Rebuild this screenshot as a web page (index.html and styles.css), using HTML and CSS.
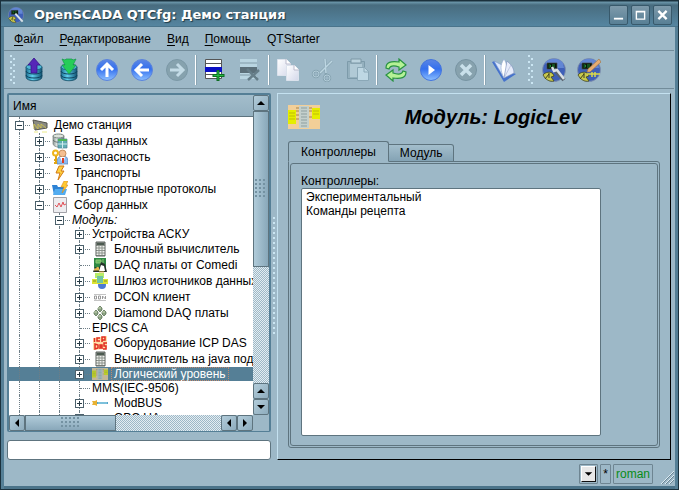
FILE: index.html
```html
<!DOCTYPE html>
<html lang="ru">
<head>
<meta charset="utf-8">
<title>OpenSCADA QTCfg: Демо станция</title>
<link rel="stylesheet" href="styles.css">
</head>
<body>
<svg class="defs" aria-hidden="true">
  <defs>
    <linearGradient id="blue" x1="0" y1="0" x2="0" y2="1"><stop offset="0" stop-color="#5b86e4"/><stop offset=".45" stop-color="#3470ee"/><stop offset="1" stop-color="#8cc0ff"/></linearGradient>
    <linearGradient id="cyl" x1="0" x2="1"><stop offset="0" stop-color="#1d6f92"/><stop offset=".4" stop-color="#5fd0ee"/><stop offset="1" stop-color="#125474"/></linearGradient>
    <linearGradient id="paper" x1="0" y1="0" x2="1" y2="1"><stop offset="0" stop-color="#ffffff"/><stop offset="1" stop-color="#d4d8ea"/></linearGradient>
    <linearGradient id="metal" x1="0" x2="1"><stop offset="0" stop-color="#8b9694"/><stop offset=".35" stop-color="#e3e9e6"/><stop offset="1" stop-color="#6d7a78"/></linearGradient>
    <symbol id="drum" viewBox="0 0 24 24">
      <path d="M4 9v10c0 5 16 5 16 0V9z" fill="url(#cyl)" stroke="#134a63" stroke-width=".8"/>
      <ellipse cx="12" cy="9" rx="8" ry="3" fill="#4fb6d6" stroke="#1a5b78" stroke-width=".8"/>
      <path d="M4 13c0 4 16 4 16 0M4 17c0 4 16 4 16 0" fill="none" stroke="#0f4560"/>
    </symbol>
    <symbol id="scada" viewBox="0 0 24 24">
      <circle cx="12" cy="12" r="11.5" fill="#3e5fb8" stroke="#8794a8" stroke-width=".8"/>
      <path d="M3 5a11.500 11.500 0 0 1 18 0l1 5H12z" fill="#6286d4"/>
      <path d="M5 5h10v6H5z" fill="#0a120a" stroke="#46504a" stroke-width=".7"/>
      <path d="M6.500 7h2v2h-2M10 7h3M10 9h3" fill="none" stroke="#1e8b32"/>
      <path d="M1 17c2-3 8-4 10-1l1 2-3 1 3 4c-4 1-7-1-9-3z" fill="#c9c94d" stroke="#43461f" stroke-width=".8"/>
      <path d="M3 21l4-5M7 15v5" stroke="#3e4120"/>
    </symbol>
    <symbol id="calc" viewBox="0 0 16 16">
      <path d="M4 1h9v14H4z" fill="#8e948e" stroke="#5d635e"/>
      <path d="M5 2h7v2H5z" fill="#4c5a50"/>
      <path d="M5.500 5v9M8.500 5v9M11.500 5v9" stroke="#eef0ec" stroke-width="2" stroke-dasharray="1.500 1"/>
    </symbol>
    <symbol id="logic" viewBox="0 0 32 24" preserveAspectRatio="none">
      <path d="M0 0h32v24H0z" fill="#f2cf98"/>
      <path d="M8 3h16M8 6h3M21 6h4M8 10h3M8 14h3M21 12h4" stroke="#a4824c"/>
      <path d="M0 5h8v14H0z" fill="#e5ee00"/><path d="M24 3h8v11h-8z" fill="#e5ee00"/>
      <path d="M1 8h6M1 11h6M1 14h6M25 6h6M25 9h6" stroke="#bfbd08"/>
      <path d="M11 1h10v22H11z" fill="#c4d0cc"/>
      <path d="M13 3h6M13 6h6M13 9h6M13 12h6M13 15h6M13 18h6M13 21h6" stroke="#8e9f9f"/>
    </symbol>
  </defs>
</svg>

<div class="window">
  <header class="titlebar">
    <svg class="app-icon" viewBox="0 0 24 24"><use href="#scada"/><path d="M11 10l11 12" stroke="#d7e2e6" stroke-width="3"/></svg>
    <h1>OpenSCADA QTCfg: Демо станция</h1>
    <button class="win-btn" aria-label="Свернуть"><svg viewBox="0 0 12 12"><path d="M1 10h10" stroke="#fff" stroke-width="2"/></svg></button>
    <button class="win-btn" aria-label="Развернуть"><svg viewBox="0 0 12 12"><path d="M1.500 2h9v8.500h-9zM1 2.500h10" fill="none" stroke="#fff" stroke-width="1.500"/></svg></button>
    <button class="win-btn" aria-label="Закрыть"><svg viewBox="0 0 12 12"><path d="M1.500 1.500l9 9M10.500 1.500l-9 9" stroke="#fff" stroke-width="2.500"/></svg></button>
  </header>

  <nav class="menubar">
    <button><u>Ф</u>айл</button>
    <button><u>Р</u>едактирование</button>
    <button><u>В</u>ид</button>
    <button><u>П</u>омощь</button>
    <button>QTStarter</button>
  </nav>

  <div class="toolbar">
    <span class="grip"></span>
    <button aria-label="Загрузить"><svg viewBox="0 0 24 24"><use href="#drum"/><path d="M12 0l6 7h-3v8H9V7H6z" fill="#5626b8" stroke="#37158a" stroke-width=".8"/></svg></button>
    <button aria-label="Сохранить"><svg viewBox="0 0 24 24"><use href="#drum"/><path d="M5 1l3 1 1-1h6l1 1 3-1-3 6h3l-7 9-7-9h3z" fill="#25cd58" stroke="#16964a" stroke-width=".7"/></svg></button>
    <span class="sep"></span>
    <button aria-label="Вверх"><svg viewBox="0 0 24 24"><circle cx="12" cy="12" r="10.500" fill="url(#blue)" stroke="#5b84dc"/><path d="M12 19V7M6 12l6-6 6 6" fill="none" stroke="#fff" stroke-width="3"/></svg></button>
    <button aria-label="Назад"><svg viewBox="0 0 24 24"><circle cx="12" cy="12" r="10.500" fill="url(#blue)" stroke="#5b84dc"/><path d="M19 12H7M12 6l-6 6 6 6" fill="none" stroke="#fff" stroke-width="3"/></svg></button>
    <button aria-label="Вперёд" disabled><svg viewBox="0 0 24 24"><circle cx="12" cy="12" r="10.500" fill="#86a2ae" stroke="#7b98a6"/><path d="M5 12h12M12 6l6 6-6 6" fill="none" stroke="#c3dbe6" stroke-width="3"/></svg></button>
    <span class="sep"></span>
    <button aria-label="Добавить"><svg viewBox="0 0 24 24"><path d="M2.500 1.500h16v19h-16zM2 5.500h17M2 16.500h17" fill="#fff" stroke="#555"/><path d="M2 9h17v5H2z" fill="#0b10c4"/><path d="M15 12v11M9.500 17.500h12" stroke="#0d6d22" stroke-width="3"/><path d="M15 13v9M10.500 17.500h10" stroke="#27bd43"/></svg></button>
    <button aria-label="Удалить" disabled><svg viewBox="0 0 24 24"><path d="M2 1h17v20H2z" fill="#b9d5e1"/><path d="M2 5h17M2 17h17" stroke="#819ba8"/><path d="M2 9h17v6H2z" fill="#5c707a"/><path d="M9 11l11 11M21 12L10 22" stroke="#667e89" stroke-width="2.500"/></svg></button>
    <span class="sep"></span>
    <button aria-label="Копировать"><svg viewBox="0 0 24 24"><path d="M1.500 1.500h9l4 4v12h-13z" fill="url(#paper)" stroke="#dbe2ec"/><path d="M10 1v5h5" fill="#fff" stroke="#bbc"/><path d="M10.500 7.500h8l4 4v11h-12z" fill="url(#paper)" stroke="#dbe2ec"/><path d="M18 7v5h5" fill="#fff" stroke="#bbc"/></svg></button>
    <button aria-label="Вырезать" disabled><svg viewBox="0 0 24 24"><g fill="none" stroke="#86a3b1" stroke-width="2.500"><path d="M21 3L8 16M14 1l1 16"/><circle cx="5" cy="16" r="3"/><circle cx="16" cy="20" r="3"/></g><path d="M21 3L9 15M14 1l1 14" stroke="#bdd6e2" stroke-width="1.500"/><circle cx="5" cy="16" r="3" fill="none" stroke="#b2ccd8"/><circle cx="16" cy="20" r="3" fill="none" stroke="#b2ccd8"/></svg></button>
    <button aria-label="Вставить" disabled><svg viewBox="0 0 24 24"><path d="M1.500 3.500h17v17h-17z" fill="#94b0be" stroke="#7d9baa"/><path d="M4 6h12v13H4z" fill="#b1cad6"/><path d="M5 1h10v4H5z" fill="#bad2dd" stroke="#7c98a6"/><path d="M11.500 9.500h7l4 4v9h-11z" fill="#bed7e3" stroke="#8ba8b7"/><path d="M18 9v5h5" fill="none" stroke="#8ba8b7"/></svg></button>
    <span class="sep"></span>
    <button aria-label="Обновить"><svg viewBox="0 0 24 24"><path d="M2 10c0-6 5-7 13-6V1l7 6-7 5V9C9 7 6 8 5 11z" fill="#b5f296" stroke="#299342" stroke-width="1.200"/><path d="M22 14c0 6-5 7-13 6v3l-7-6 7-5v3c6 2 9 1 10-2z" fill="#b5f296" stroke="#299342" stroke-width="1.200"/></svg></button>
    <button aria-label="Запустить"><svg viewBox="0 0 24 24"><circle cx="12" cy="12" r="10.500" fill="url(#blue)" stroke="#4475dd"/><path d="M9.500 7l6.500 5-6.500 5z" fill="#fff"/></svg></button>
    <button aria-label="Остановить" disabled><svg viewBox="0 0 24 24"><circle cx="12" cy="12" r="10.500" fill="#87a2ae" stroke="#7794a2"/><path d="M7 7l10 10M17 7L7 17" stroke="#c9e0ea" stroke-width="3.500"/></svg></button>
    <span class="sep"></span>
    <button aria-label="Руководство"><svg viewBox="0 0 24 24"><path d="M0 4l3-1 9 17 9-5 3 1-12 8z" fill="#4673cc"/><path d="M2 3l8 4 2 13z" fill="#dce8fb" stroke="#7b97cf" stroke-width=".6"/><path d="M12 20C8 12 8 7 12 1c3 5 3 8 2 12z" fill="#fff" stroke="#8ea4cf" stroke-width=".6"/><path d="M12 20l3-17c3 3 7 6 7 12z" fill="#e6ebfa" stroke="#7b8dba" stroke-width=".6"/><path d="M12 20l7-13" stroke="#a4b0d2" stroke-width=".6"/></svg></button>
    <span class="grip second"></span>
    <button aria-label="Конфигуратор"><svg viewBox="0 0 24 24"><use href="#scada"/><path d="M12 11l10 11" stroke="#59636e" stroke-width="4"/><path d="M10 9l2 4 3-1 7 9" fill="none" stroke="#dae0e6" stroke-width="2.500"/></svg></button>
    <button aria-label="Визуализация"><svg viewBox="0 0 24 24"><use href="#scada"/><path d="M10 16h13M15 14v5M18 14v5" stroke="#dada4b" stroke-width="1.500"/><path d="M10 14l1-3L22 1l2 3-11 10z" fill="#e5ac72" stroke="#9b6b41" stroke-width=".6"/></svg></button>
  </div>

  <main class="content">
    <section class="side">
      <div class="tree">
        <div class="tree-main">
          <div class="tree-head">Имя</div>
          <div class="rows" role="tree">
            <div class="row"><i class="cell tie"><button class="toggle" aria-label="Свернуть"></button></i><svg viewBox="0 0 16 16"><path d="M1 3l14 3v5L3 13z" fill="#8a8a80" stroke="#55554e"/><path d="M2 12V7l4 5V7l3 4V7l5 4" fill="none" stroke="#c8bd54"/><path d="M2 15h4M10 15h5" stroke="#eceb8a"/></svg><span>Демо станция</span></div>
            <div class="row"><i class="cell"></i><i class="cell tie"><button class="toggle plus" aria-label="Развернуть"></button></i><svg viewBox="0 0 16 16"><path d="M1 3v8c1 4 10 4 11 0V3z" fill="url(#metal)" stroke="#798180" stroke-width=".7"/><ellipse cx="6.500" cy="3" rx="5.500" ry="2" fill="#dce3dc" stroke="#788480"/><path d="M1 7c2 3 9 3 11 0" fill="none" stroke="#65716e"/><path d="M6 6h9v9H6z" fill="#61aeb4" stroke="#4b7f95" stroke-width=".7"/><path d="M6 6h9v2H6z" fill="#4eb557"/><path d="M6 11h9M10.500 8v7" stroke="#d1edf1"/></svg><span>Базы данных</span></div>
            <div class="row"><i class="cell"></i><i class="cell tie"><button class="toggle plus" aria-label="Развернуть"></button></i><svg viewBox="0 0 16 16"><path d="M5 15c0-7 2-8 6-8s5 2 5 8z" fill="#8cbcf1" stroke="#557fb6" stroke-width=".7"/><circle cx="10.500" cy="4.500" r="3.500" fill="#f4bf91" stroke="#b4743b" stroke-width=".7"/><path d="M8 8l3 7 2-7" fill="#fff"/><path d="M11 9v5" stroke="#dd3d28" stroke-width="2"/><circle cx="3.500" cy="4" r="2.500" fill="none" stroke="#eeb51d" stroke-width="2"/><path d="M4 7v8M4 11H2M4 14H2" stroke="#e1a516" stroke-width="2"/></svg><span>Безопасность</span></div>
            <div class="row"><i class="cell"></i><i class="cell tie"><button class="toggle plus" aria-label="Развернуть"></button></i><svg viewBox="0 0 16 16"><path d="M7 1h5L9 6h3l-6 9 2-7H4z" fill="#ffd13f" stroke="#d27914"/></svg><span>Транспорты</span></div>
            <div class="row"><i class="cell"></i><i class="cell tie"><button class="toggle plus" aria-label="Развернуть"></button></i><svg viewBox="0 0 16 16"><path d="M0 4h5l1 2h7v8H2z" fill="#2d82d5"/><path d="M3 8h12l-2 6H1z" fill="#53acf0"/><path d="M12 0h4l-2 4h2l-6 8 2-6h-3z" fill="#ffc931" stroke="#d88a1e" stroke-width=".6"/></svg><span>Транспортные протоколы</span></div>
            <div class="row"><i class="cell"></i><i class="cell tie"><button class="toggle" aria-label="Свернуть"></button></i><svg viewBox="0 0 16 16"><path d="M1.500.5h13v15h-13z" fill="#ededf0" stroke="#a2a2a8"/><path d="M3 8l2 2 2-4 2 4 2-5 1 3 2-1" fill="none" stroke="#e25259"/></svg><span>Сбор данных</span></div>
            <div class="row bare"><i class="cell"></i><i class="cell"></i><i class="cell tie"><button class="toggle" aria-label="Свернуть"></button></i><em>Модуль:</em></div>
            <div class="row bare"><i class="cell"></i><i class="cell"></i><i class="cell"></i><i class="cell tie"><button class="toggle plus" aria-label="Развернуть"></button></i><span>Устройства АСКУ</span></div>
            <div class="row"><i class="cell"></i><i class="cell"></i><i class="cell"></i><i class="cell tie"><button class="toggle plus" aria-label="Развернуть"></button></i><svg><use href="#calc"/></svg><span>Блочный вычислитель</span></div>
            <div class="row"><i class="cell"></i><i class="cell"></i><i class="cell"></i><i class="cell tie"></i><svg viewBox="0 0 16 16"><path d="M2 1h12v10H2z" fill="#2d8842"/><path d="M4 3h5v3H4zM11 2v5" fill="#67bc60" stroke="#90c575"/><path d="M1 15l2-5 4 1 2-6 4 2 2 8z" fill="#26322c"/><path d="M7 14l2-6 3 1 1 5z" fill="#fff"/><path d="M2 13l4-3 1 3zM7 15h5" fill="#e8b84a" stroke="#e8b84a"/></svg><span>DAQ платы от Comedi</span></div>
            <div class="row"><i class="cell"></i><i class="cell"></i><i class="cell"></i><i class="cell tie"><button class="toggle plus" aria-label="Развернуть"></button></i><svg viewBox="0 0 16 16"><path d="M3 0h9v5H3z" fill="#b7ec68"/><circle cx="10" cy="12" r="4" fill="#4d79d2"/><path d="M0 6h16v5H0z" fill="#dce331"/><path d="M5 3h6v7H5z" fill="#70c5a2"/><path d="M1 8h3M12 8h3" stroke="#7c8b2c"/></svg><span>Шлюз источников данных</span></div>
            <div class="row"><i class="cell"></i><i class="cell"></i><i class="cell"></i><i class="cell tie"><button class="toggle plus" aria-label="Развернуть"></button></i><svg viewBox="0 0 16 16"><path d="M2 5.500h12M2 11.500h12" stroke="#c4c4c4"/><path d="M2.500 7v3h2V7zM6.500 7v3h2V7zM10.500 10V7l3 3V7" fill="none" stroke="#999"/></svg><span>DCON клиент</span></div>
            <div class="row"><i class="cell"></i><i class="cell"></i><i class="cell"></i><i class="cell tie"><button class="toggle plus" aria-label="Развернуть"></button></i><svg viewBox="0 0 16 16"><g fill="#8ba282" stroke="#526b4c" stroke-width=".7"><path d="M8 1l2 2v2L8 7 6 5V3zM4 5l2 2v2l-2 2-2-2V7zM12 5l2 2v2l-2 2-2-2V7zM8 9l2 2v2l-2 2-2-2v-2z"/></g><path d="M6 3h3M2 7h3M10 7h3M6 11h3" stroke="#cad8b7"/></svg><span>Diamond DAQ платы</span></div>
            <div class="row bare"><i class="cell"></i><i class="cell"></i><i class="cell"></i><i class="cell tie"></i><span>EPICS CA</span></div>
            <div class="row"><i class="cell"></i><i class="cell"></i><i class="cell"></i><i class="cell tie"><button class="toggle plus" aria-label="Развернуть"></button></i><svg viewBox="0 0 16 16"><path d="M1 3l14-2v13L1 15z" fill="#ffdfa9"/><path d="M2.500 3v4M8 3H5v3h3M10 7V2h3v3h-3M3 9v5l3-1v-3zM8 14v-4h2v4M8 12h2M15 8h-3v3h2v3h-3" fill="none" stroke="#e12c21" stroke-width="1.500"/></svg><span>Оборудование ICP DAS</span></div>
            <div class="row"><i class="cell"></i><i class="cell"></i><i class="cell"></i><i class="cell tie"><button class="toggle plus" aria-label="Развернуть"></button></i><svg><use href="#calc"/></svg><span>Вычислитель на java подобном языке</span></div>
            <div class="row bare selected"><i class="cell"></i><i class="cell"></i><i class="cell"></i><i class="cell tie"><button class="toggle plus" aria-label="Развернуть"></button></i><svg class="dim"><use href="#logic"/></svg><span>Логический уровень</span></div>
            <div class="row bare"><i class="cell"></i><i class="cell"></i><i class="cell"></i><i class="cell tie"></i><span>MMS(IEC-9506)</span></div>
            <div class="row"><i class="cell"></i><i class="cell"></i><i class="cell"></i><i class="cell tie"><button class="toggle plus" aria-label="Развернуть"></button></i><svg viewBox="0 0 16 16"><path d="M4 8h12" stroke="#55a5c9" stroke-width="2"/><path d="M6 8h9" stroke="#a4dced"/><path d="M0 6h3l2-1v6l-2-1H0l1-2z" fill="#e8b132"/></svg><span>ModBUS</span></div>
            <div class="row bare"><i class="cell"></i><i class="cell"></i><i class="cell"></i><i class="cell tie"><button class="toggle plus" aria-label="Развернуть"></button></i><svg></svg><span>OPC UA</span></div>
          </div>
          <div class="hscroll">
            <button class="arrow" aria-label="Влево"><svg viewBox="0 0 14 14"><path d="M9 3v8L5 7z"/></svg></button>
            <div class="thumb"><i class="dots wide"></i></div>
            <div class="groove"></div>
            <button class="arrow" aria-label="Влево"><svg viewBox="0 0 14 14"><path d="M9 3v8L5 7z"/></svg></button>
            <button class="arrow" aria-label="Вправо"><svg viewBox="0 0 14 14"><path d="M5 3v8l4-4z"/></svg></button>
          </div>
        </div>
        <div class="vscroll">
          <button class="arrow" aria-label="Вверх"><svg viewBox="0 0 14 14"><path d="M3 9h8L7 5z"/></svg></button>
          <div class="thumb"><i class="dots"></i></div>
          <div class="groove"></div>
          <button class="arrow" aria-label="Вверх"><svg viewBox="0 0 14 14"><path d="M3 9h8L7 5z"/></svg></button>
          <button class="arrow" aria-label="Вниз"><svg viewBox="0 0 14 14"><path d="M3 5h8L7 9z"/></svg></button>
        </div>
      </div>
      <input class="search" type="text" aria-label="Поиск">
    </section>

    <div class="splitter"><i></i></div>

    <section class="panel">
      <div class="panel-head">
        <svg class="panel-icon"><use href="#logic"/></svg>
        <h2>Модуль: LogicLev</h2>
      </div>
      <div class="tabs">
        <button class="tab active">Контроллеры</button>
        <button class="tab">Модуль</button>
      </div>
      <div class="pane">
        <div class="pane-inner">
          <label for="controllers">Контроллеры:</label>
          <select id="controllers" size="8">
            <option>Экспериментальный</option>
            <option>Команды рецепта</option>
          </select>
        </div>
      </div>
    </section>
  </main>

  <footer class="status">
    <span class="box narrow"><button class="drop" aria-label="Сообщения"><svg viewBox="0 0 14 14"><path d="M3 5h8l-4 4z"/></svg></button></span>
    <span class="box">*</span>
    <span class="box user">roman</span>
    <svg class="resize" viewBox="0 0 14 14"><path d="M1 14L14 1M5 14l9-9M9 14l5-5" stroke="#dcebf3"/><path d="M2 14L14 2M6 14l8-8M10 14l4-4" stroke="#6a8594"/></svg>
  </footer>
</div>
</body>
</html>
```

FILE: styles.css
```css
:root {
  --bg: #9db8c7;
  --line: #5e747f;
  --accent: #557f96;
  --light: #c4e1f0;
}

* { box-sizing: border-box; }

body {
  margin: 0;
  font: 12px/14px "Liberation Sans", Arial, sans-serif;
  color: #000;
}

button, input, select {
  font: inherit;
  color: inherit;
  margin: 0;
  padding: 0;
  border: 0;
  background: none;
}

svg { display: block; flex: none; }
.defs { position: absolute; width: 0; height: 0; }

.window {
  display: flex;
  flex-direction: column;
  height: 100vh;
  background: var(--bg);
  border: 1px solid #1b313d;
  border-top: 0;
  box-shadow: inset 3px 0 var(--accent), inset -3px 0 var(--accent), inset 0 -3px #4b7389;
  padding: 0 4px 4px 3px;
}

/* title bar */
.titlebar {
  display: flex;
  align-items: center;
  gap: 3px;
  height: 27px;
  flex: none;
  margin: 0 -4px 0 -3px;
  padding: 2px 6px 0 7px;
  background: linear-gradient(#1b313d 1px, #6d98ac 2px, #486c7f 5px, #5585a0 26px, #3f6376);
}
.app-icon { width: 16px; height: 16px; }
.titlebar h1 {
  flex: 1;
  margin: 0 0 0 7px;
  font: bold 13px/16px "DejaVu Sans", sans-serif;
  color: #fff;
  text-shadow: 1px 1px 1px #1f3844;
  white-space: nowrap;
}
.win-btn {
  width: 19px;
  height: 20px;
  padding: 3px;
  border: 1px solid #38596b;
  border-radius: 2px;
  background: linear-gradient(#7e9aab, #587f95);
}
.win-btn svg { width: 11px; height: 12px; }

/* menu */
.menubar {
  display: flex;
  gap: 16px;
  height: 24px;
  flex: none;
  padding: 0 10px;
  border-bottom: 1px solid #728c9a;
}
.menubar u { text-underline-offset: 2px; }

/* tool bar */
.toolbar {
  display: flex;
  align-items: center;
  height: 38px;
  flex: none;
  padding: 0 6px;
  border-bottom: 1px solid #728c9a;
}
.toolbar button {
  display: grid;
  place-items: center;
  width: 35px;
  height: 34px;
  flex: none;
}
.toolbar button svg { width: 24px; height: 24px; }
.sep {
  width: 3px;
  height: 30px;
  border: solid #8ba5b3;
  border-width: 0 1px 0 0;
  background: linear-gradient(90deg, transparent 1px, #fff 1px);
}
.grip {
  width: 6px;
  height: 30px;
  background:
    linear-gradient(#cbe6f3, #cbe6f3) 0 0 / 2px 2px,
    linear-gradient(#cbe6f3, #cbe6f3) 0 0 / 2px 2px;
  background:
    conic-gradient(from 270deg at 2px 2px, #cbe6f3 90deg, transparent 0) 0 0 / 6px 6px,
    conic-gradient(from 270deg at 2px 2px, #cbe6f3 90deg, transparent 0) 3px 3px / 6px 6px;
}
.grip.second { margin: 0 2px 0 7px; }

/* central area */
.content {
  display: flex;
  flex: 1;
  min-height: 0;
  padding: 4px 3px 0;
}
.side {
  display: flex;
  flex-direction: column;
  gap: 8px;
  width: 264px;
  flex: none;
}
.tree {
  display: flex;
  flex: 1;
  min-height: 0;
  border: 2px solid var(--accent);
  border-bottom-width: 1px;
  border-radius: 2px;
}
.tree-main {
  display: flex;
  flex-direction: column;
  flex: 1;
  min-width: 0;
}
.tree-head {
  height: 22px;
  flex: none;
  padding: 4px;
  background: linear-gradient(#a3bdcb, #93b0c0);
  border-bottom: 1px solid var(--line);
}
.rows {
  flex: 1;
  overflow: hidden;
  background: #fff;
}
.row {
  display: flex;
  align-items: center;
  height: 16px;
  white-space: nowrap;
}
.row.bare { height: 14px; }
.row svg { width: 16px; height: 16px; margin: 0 3px 0 0; }
.row svg.dim { height: 12px; opacity: .7; }
.row svg + span { padding: 0 3px; }
.row > .tie { margin-right: 3px; }
.selected { background: var(--accent); color: #fff; }
.selected span { outline: 1px dotted #c08a70; outline-offset: -1px; }

.cell {
  position: relative;
  display: grid;
  place-items: center;
  width: 20px;
  height: 100%;
  flex: none;
}
.cell::before {
  content: "";
  position: absolute;
  top: 0;
  bottom: 0;
  left: 10px;
  border-left: 1px dotted #6d7d86;
}
.tie::after {
  content: "";
  position: absolute;
  top: 50%;
  left: 11px;
  width: 10px;
  border-top: 1px dotted #6d7d86;
}
.toggle {
  z-index: 1;
  width: 9px;
  height: 9px;
  border: 1px solid #4c616c;
  background: linear-gradient(#263943, #263943) center / 5px 1px no-repeat, #fff;
}
.toggle.plus {
  background:
    linear-gradient(#263943, #263943) center / 5px 1px no-repeat,
    linear-gradient(#263943, #263943) center / 1px 5px no-repeat, #fff;
}

/* scroll bars */
.vscroll, .hscroll { display: flex; flex: none; }
.vscroll { flex-direction: column; width: 16px; padding-bottom: 16px; }
.hscroll { height: 16px; }
.arrow {
  width: 16px;
  height: 16px;
  flex: none;
  border: 1px solid var(--line);
  border-radius: 2px;
  background: linear-gradient(135deg, #b2ccda, #8eacbd);
}
.arrow svg { width: 14px; height: 14px; }
.thumb {
  display: grid;
  place-items: center;
  flex: none;
  border: 1px solid var(--line);
}
.vscroll .thumb { height: 156px; background: linear-gradient(90deg, #b0cbd9, #89a8ba); }
.hscroll .thumb { width: 91px; background: linear-gradient(#b0cbd9, #89a8ba); }
.groove {
  flex: 1;
  background: repeating-conic-gradient(#9db8c7 0 25%, #e4edf2 0 50%) 0 0 / 2px 2px;
}
.dots {
  width: 12px;
  height: 20px;
  background: conic-gradient(from 270deg at 2px 2px, #7492a2 90deg, transparent 0) 0 0 / 4px 4px;
}
.dots.wide { width: 20px; height: 12px; }

.search {
  width: 100%;
  height: 20px;
  flex: none;
  border: 1px solid var(--line);
  border-radius: 3px;
  padding: 0 4px;
  background: #fff;
}

.splitter {
  display: grid;
  place-items: center;
  width: 6px;
  flex: none;
}
.splitter i {
  width: 3px;
  height: 120px;
  background: conic-gradient(from 270deg at 2px 2px, #cbe6f3 90deg, transparent 0) 0 0 / 3px 5px;
}

/* right panel */
.panel {
  display: flex;
  flex-direction: column;
  flex: 1;
  min-width: 0;
  padding: 11px 10px;
  border: 1px solid #000;
  border-top-color: var(--light);
  border-left-color: var(--light);
}
.panel-head { display: flex; align-items: center; }
.panel-icon { width: 32px; height: 24px; }
.panel-head h2 {
  flex: 1;
  margin: 0;
  padding-left: 6px;
  font: italic bold 20px/24px "Liberation Sans", Arial, sans-serif;
  text-align: center;
}
.tabs {
  display: flex;
  align-items: flex-end;
  margin-top: 12px;
}
.tab {
  position: relative;
  height: 18px;
  margin-bottom: -1px;
  padding: 0 11px;
  border: 1px solid var(--line);
  border-left: 0;
  border-radius: 0 3px 0 0;
  background: linear-gradient(#a3becc, #84a3b4);
}
.tab.active {
  z-index: 1;
  height: 21px;
  padding: 0 12px;
  border-left: 1px solid var(--line);
  border-bottom-color: var(--bg);
  border-radius: 3px 3px 0 0;
  background: var(--bg);
}
.pane {
  display: flex;
  flex: 1;
  min-height: 0;
  padding: 1px;
  border: 1px solid var(--line);
  border-radius: 0 3px 3px 3px;
}
.pane-inner {
  display: flex;
  flex-direction: column;
  flex: 1;
  padding: 10px 56px 9px 10px;
  border: 1px solid var(--line);
  border-radius: 3px;
}
.pane-inner select {
  flex: 1;
  width: 100%;
  padding: 1px 0;
  border: 1px solid var(--line);
  border-radius: 2px;
  background: #fff;
  overflow: hidden;
  outline: 0;
}
.pane-inner option {
  min-height: 14px;
  padding: 0 4px;
  line-height: 14px;
}

/* status bar */
.status {
  display: flex;
  justify-content: flex-end;
  gap: 2px;
  height: 25px;
  flex: none;
  padding: 4px 0 0;
}
.box {
  display: grid;
  place-items: center;
  height: 20px;
  padding: 0 2px;
  border: 1px solid #6e8592;
  border-radius: 1px;
}
.box.narrow { padding: 0 1px; }
.user { color: #078c16; }
.drop {
  width: 15px;
  height: 16px;
  border: 1px solid #fff;
  border-right-color: #111;
  border-bottom-color: #111;
  background: #e8e8e8;
}
.drop svg { width: 13px; height: 14px; }
.resize { width: 14px; height: 14px; margin: 6px 0 0 5px; }
```
